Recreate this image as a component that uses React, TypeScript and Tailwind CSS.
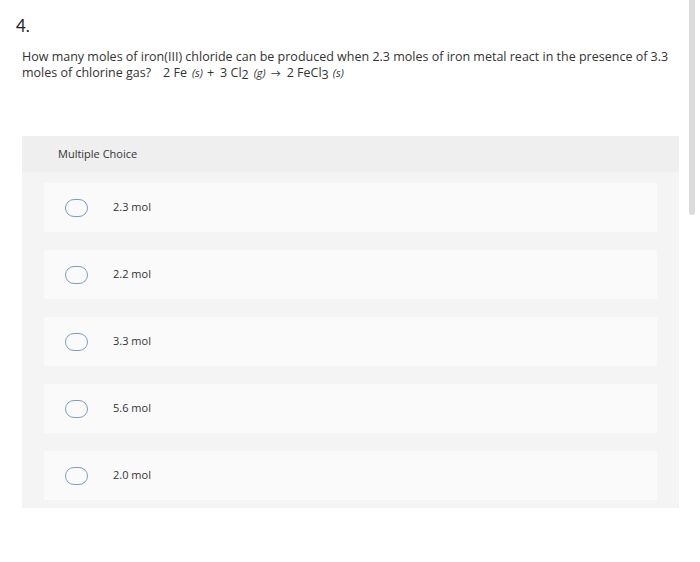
import React from "react";

const options = ["2.3 mol", "2.2 mol", "3.3 mol", "5.6 mol", "2.0 mol"];

export default function App() {
  return (
    <div className="relative w-[700px] h-[562px] bg-white text-[#333] overflow-hidden" style={{ fontFamily: "'Open Sans', Lato, sans-serif" }}>
      <div className="absolute right-[5px] top-0 w-[6px] h-[215px] bg-[#dcdcdc] rounded-b-[3px]" />
      <div className="pl-[16px] pt-[16px] h-[36px] text-[17px] leading-[20px] text-[#222]" style={{ fontFamily: "Lato, sans-serif" }}>4.</div>
      <div className="pl-[22px] pr-[20px] pt-[13px] text-[12.5px] leading-[16px] text-[#333]">
        How many moles of iron(III) chloride can be produced when 2.3 moles of iron metal react in the presence of 3.3 moles of chlorine gas?
        <span className="ml-[12px]">
          2 Fe<i className="text-[11px] ml-[5px] mr-[4px]">(s)</i>+<span className="ml-[6px]">3 Cl</span><span className="relative top-[2px]">2</span>
          <i className="text-[11px] ml-[5px] mr-[5px]">(g)</i><span className="text-[10px] mr-[6px]">→</span>2 FeCl<span className="relative top-[2px]">3</span>
          <i className="text-[11px] ml-[4px]">(s)</i>
        </span>
      </div>
      <div className="ml-[22px] mt-[55px] w-[657px] bg-[#f4f4f4] pb-[8px]">
        <div className="h-[36px] bg-[#efefef] flex items-center pl-[36px] text-[11px] text-[#333]">Multiple Choice</div>
        <div className="flex flex-col gap-[18px] pt-[11px] px-[22px]">
          {options.map((o) => (
            <div key={o} className="h-[49px] bg-[#fafafa] flex items-center">
              <div className="ml-[21px] w-[23px] h-[18px] rounded-full border-[1.5px] border-[#7f9dc0]" />
              <div className="ml-[25px] text-[11px] text-[#333]">{o}</div>
            </div>
          ))}
        </div>
      </div>
    </div>
  );
}
